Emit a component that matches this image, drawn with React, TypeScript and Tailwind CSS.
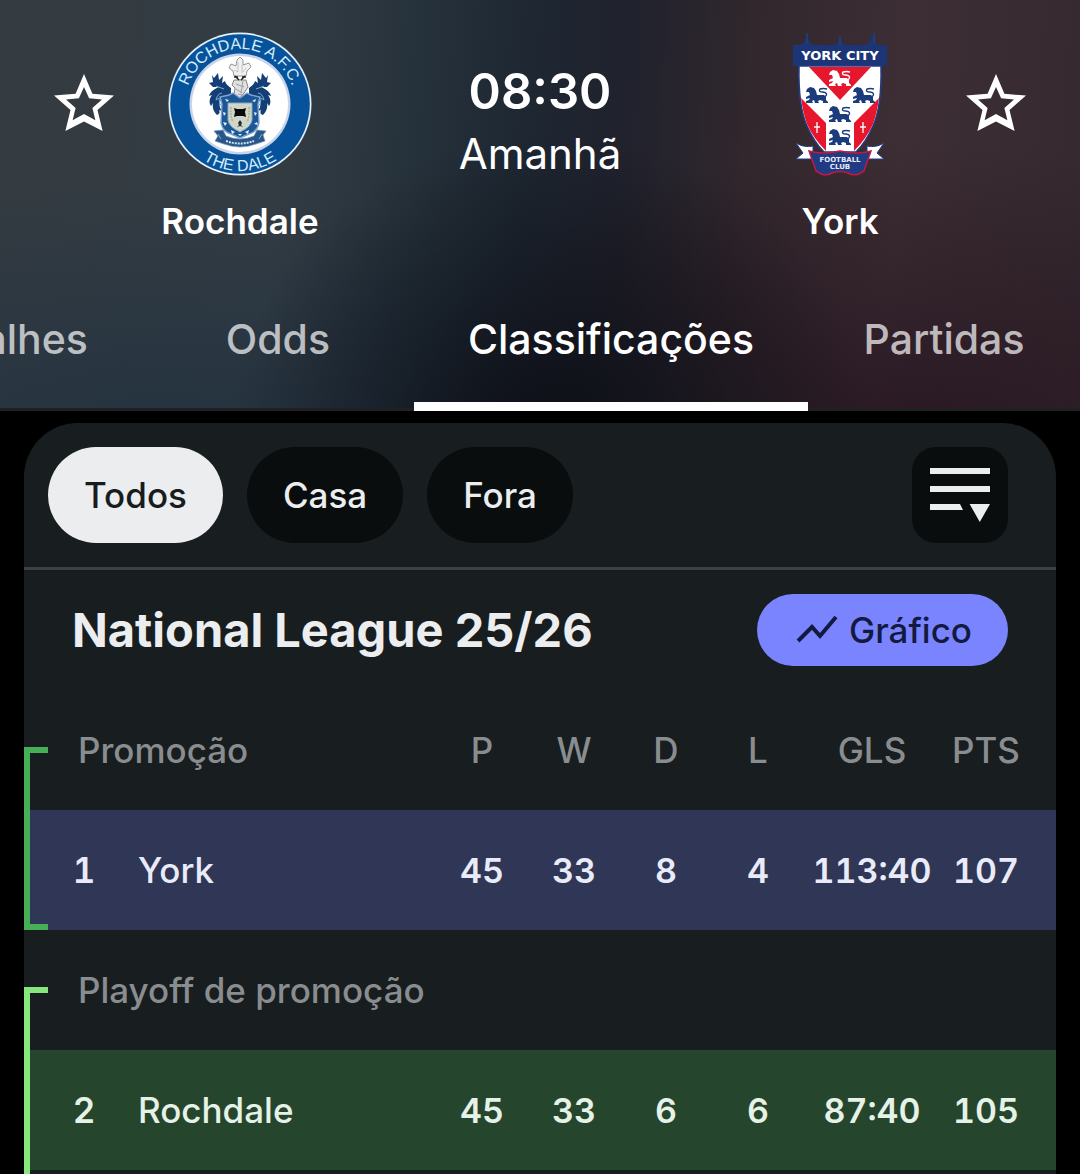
import { useState } from "react";
import { clsx } from "clsx";

interface Standing {
  rank: number;
  team: string;
  stats: string[];
  rowClass: string;
}

interface StandingGroup {
  label: string;
  bracketClass: string;
  rows: Standing[];
}

const tabs = ["Detalhes", "Odds", "Classificações", "Partidas"];
const filters = ["Todos", "Casa", "Fora"];
const columns = ["P", "W", "D", "L", "GLS", "PTS"];

const groups: StandingGroup[] = [
  {
    label: "Promoção",
    bracketClass: "bottom-0 border-y-6 border-[#46af58]",
    rows: [
      {
        rank: 1,
        team: "York",
        stats: ["45", "33", "8", "4", "113:40", "107"],
        rowClass: "bg-[#303656] text-[#e9ebf8]",
      },
    ],
  },
  {
    label: "Playoff de promoção",
    bracketClass: "-bottom-1 border-t-6 border-[#87e67c]",
    rows: [
      {
        rank: 2,
        team: "Rochdale",
        stats: ["45", "33", "6", "6", "87:40", "105"],
        rowClass: "bg-[#25452d] text-[#e6f2e7]",
      },
    ],
  },
];

function RochdaleCrest() {
  return (
    <svg viewBox="0 0 144 144" className="size-36" role="img" aria-label="Rochdale A.F.C.">
      <defs>
        <path id="roch-top" d="M17 72a55 55 0 0 1 110 0" />
        <path id="roch-bottom" d="M5 72a67 67 0 0 0 134 0" />
      </defs>
      <circle cx="72" cy="72" r="71.5" fill="#e4f1fa" />
      <circle cx="72" cy="72" r="69.8" fill="#06539c" />
      <circle cx="72" cy="72" r="50.5" fill="#c9d4ea" />
      <circle cx="72" cy="72" r="48" fill="#fff" />
      <g fill="#d3ecfb" fontFamily="Liberation Sans, sans-serif" fontSize="16" textAnchor="middle">
        <text>
          <textPath href="#roch-top" startOffset="50%">ROCHDALE A.F.C.</textPath>
        </text>
        <text>
          <textPath href="#roch-bottom" startOffset="50%">THE DALE</textPath>
        </text>
      </g>
      {/* mantling */}
      <g fill="#123f75">
        <path id="roch-mantle" d="M63 56c-4-3-5-4-6-7l-3 2 1-7-4 4-1-7-4 5-2-3 1 7-4 1 4 4 6 0c-5 2-9 5-10 9l3-1c-3 4-3 8-1 11l2-3c-1 5 1 9 4 12 3-1 3-3 2-5l3 1c-3-4-3-8-1-11l2 2c0-5 4-7 8-6z" />
        <use href="#roch-mantle" transform="matrix(-1 0 0 1 144 0)" />
      </g>
      <path d="M54 61q-5 1-6 7l3-2q0 6 3 9M90 61q5 1 6 7l-3-2q0 6-3 9M48 54l8 3M96 54l-8 3" fill="none" stroke="#7fa9d4" strokeWidth="1" />
      {/* helmet and wool sack */}
      <path d="M69 28l3-3 3 3v5l6-2 2 4-4 4-1 5H66l-1-5-4-3 2-4 5 2z" fill="#f1f1f1" stroke="#8d8d8d" strokeWidth=".9" />
      <path d="M70 30v10M74 33v8M66 38l4 2M78 36l-3 4" stroke="#b9b9b9" strokeWidth=".8" />
      <path d="M66 48h12l2 7-4 6-5 6-5-4 1-7-3-3z" fill="#e0e0e2" stroke="#77777c" strokeWidth=".9" />
      <path d="M68 52l8 3M68 57l6 4M75 49l-2 12M70 62l4 1" stroke="#96969b" strokeWidth=".9" />
      <path d="M67 44l4 4M77 44l-4 4M66 45h4M74 45h4" stroke="#16202c" strokeWidth="1.4" />
      {/* shield */}
      <path d="M52 65l9-2 4-2 7 5 7-5 4 2 9 2-2 7 1 19q-2 9-10 11l-9 4-9-4q-8-2-10-11l1-19z" fill="#1b5796" stroke="#7ea3cb" strokeWidth="1.4" />
      <path d="M60 71h24v17q-1 7-12 12-11-5-12-12z" fill="#cfd7cb" stroke="#89a6c5" strokeWidth="1" />
      <path d="M63 75q-1 9 2 15M81 75q1 9-2 15" fill="none" stroke="#a9b57a" strokeWidth="1.5" strokeDasharray="2 1" />
      <path d="M66 76l3 1h6l3-1-1 4 1 5-3-1h-6l-3 1 1-5z" fill="#0b0b0b" />
      <path d="M70 91l2-3 2 3-1 2 2 2-3-1-3 1 2-2z" fill="#2a2b28" />
      <g fill="#e6f2fa">
        <path d="M57 67l4 1-2 2zM84 69l4-2-1 3zM55 80l3 1-2 3zM86 80l3 1-2 3zM55 90l4 1-2 3zM86 92l3-2 1 3zM63 98l4 2-3 2zM77 100l4-2-1 4zM70 102h4l-2 2z" />
      </g>
      {/* motto ribbon */}
      <path d="M46 99l9-1 3 6q14 6 28 0l3-6 9 1-3 4 2 6-9 3q-16 6-32 0l-9-3 3-5z" fill="#275789" stroke="#7494b6" strokeWidth=".7" />
      <path d="M58 109q14 5 28 0" fill="none" stroke="#d4e2ef" strokeWidth="2" strokeDasharray="2 1" />
      <path d="M50 102l3 5M94 102l-3 5" stroke="#86a7cb" />
    </svg>
  );
}

function YorkCrest() {
  return (
    <svg viewBox="0 0 96 144" className="h-36 w-24" role="img" aria-label="York City Football Club">
      <defs>
        <g id="york-lion">
          <path
            d="M1 2l3-2 4 1 2 3 1 4h7l2 2v3l2 2v1h-5v-2l-3-1-2 1 1 2H9l-1-3-2 1 1 2H0v-2l3-1 1-2-4 1v-2l4-2-1-3-3 0z"
            fill="currentColor"
          />
          <path d="M19 10q4-4-2-5-5 0-3-3 3-1 7 0" fill="none" stroke="currentColor" strokeWidth="1.4" />
        </g>
      </defs>
      <path d="M1 13h8l4-4 2-8 2 8 3 4h22l4-2 2-8 2 8 4 2h20l4-4 2-8 2 8 4 4h9v21H1z" fill="#1b3576" />
      <path d="M15 1v10M48 4v9M82 1v10" stroke="#253f83" strokeWidth="1.5" />
      <path d="M7 34h82q1 40-8 60-7 16-17 26H32Q22 110 15 94 6 74 7 34z" fill="#fff" stroke="#223d86" strokeWidth="1.6" />
      <path d="M17 35h62L48 68z" fill="#e6172d" />
      <path d="M9 66l25 25v28Q21 106 15 92 11 81 9 66zM87 66L62 91v28q13-13 19-27 4-11 6-26z" fill="#e6172d" />
      <text x="48" y="28" fill="#fff" fontFamily="DejaVu Sans, sans-serif" fontSize="13" fontWeight="700" textAnchor="middle">
        YORK CITY
      </text>
      <use href="#york-lion" x="37" y="38" color="#fff" />
      <g color="#1c3b7c">
        <use href="#york-lion" x="14" y="55" />
        <use href="#york-lion" x="61" y="55" />
        <use href="#york-lion" x="37" y="74" />
        <use href="#york-lion" x="37" y="97" />
      </g>
      <path d="M25 90v11M22 95h6M71 90v11M68 95h6" stroke="#fff" strokeWidth="1.3" />
      <path d="M4 111q8 5 17 3v13H4l7-6zM92 111q-8 5-17 3v13h17l-7-6z" fill="#fff" stroke="#223d86" strokeWidth="1" />
      <path d="M17 119q13 4 31 0 18 4 31 0l-7 20-5 3q-6 2-11-1-8-3-16 0-5 3-11 1l-5-3z" fill="#203b83" stroke="#c4193e" strokeWidth="1.5" />
      <g fill="#e8ecf7" fontFamily="DejaVu Sans, sans-serif" fontSize="7" fontWeight="700" textAnchor="middle">
        <text x="48" y="130">FOOTBALL</text>
        <text x="48" y="137">CLUB</text>
      </g>
    </svg>
  );
}

function FavoriteButton({ team }: { team: string }) {
  return (
    <button type="button" aria-label={`Favoritar ${team}`} className="mt-9 shrink-0 self-start">
      <svg viewBox="0 0 24 24" className="size-[72px]" fill="currentColor" fillRule="evenodd" aria-hidden="true">
        <path d="M22 9.2l-7.2-.6L12 2 9.200 8.600 2 9.2l5.500 4.800L5.800 21l6.200-3.200 6.200 3.200L16.500 14zM12 15.300l-3.800 2.100 1-4.100-3.200-2.800 4.300-.4L12 6.300l1.700 3.800 4.300.4-3.200 2.800 1 4.100z" />
      </svg>
    </button>
  );
}

function MatchHeader() {
  return (
    <div className="flex px-12 pt-8">
      <FavoriteButton team="Rochdale" />
      <div className="flex w-60 flex-col items-center gap-5">
        <RochdaleCrest />
        <p className="text-[35px] leading-[50px] font-semibold">Rochdale</p>
      </div>
      <div className="flex flex-1 flex-col items-center pt-7">
        <p className="text-[49px] leading-[64px] font-semibold">08:30</p>
        <p className="text-[42px] leading-[60px]">Amanhã</p>
      </div>
      <div className="flex w-60 flex-col items-center gap-5">
        <YorkCrest />
        <p className="text-[35px] leading-[50px] font-semibold">York</p>
      </div>
      <FavoriteButton team="York" />
    </div>
  );
}

function Tabs() {
  const [active, setActive] = useState("Classificações");

  return (
    <nav className="mt-[22px] flex h-[143px] justify-end overflow-hidden">
      {tabs.map((tab) => (
        <button
          key={tab}
          type="button"
          onClick={() => setActive(tab)}
          className={clsx(
            "min-w-[272px] shrink-0 px-[54px] text-[41px] font-medium",
            active === tab
              ? "border-b-9 border-white pt-[10px] text-white"
              : "border-b-3 border-[#202123] pt-1 text-white/70"
          )}
        >
          {tab}
        </button>
      ))}
    </nav>
  );
}

function FilterBar() {
  const [active, setActive] = useState("Todos");

  return (
    <div className="flex items-center gap-6 border-b-3 border-[#3d4143] py-6 pr-12 pl-6">
      {filters.map((filter) => (
        <button
          key={filter}
          type="button"
          onClick={() => setActive(filter)}
          className={clsx(
            "h-24 rounded-full px-9 text-[35px] font-medium",
            active === filter ? "bg-[#ebedef] text-[#171c1e]" : "bg-[#090d0e] text-[#ebedef]"
          )}
        >
          {filter}
        </button>
      ))}
      <button
        type="button"
        aria-label="Ordenar"
        className="ml-auto flex size-24 items-center justify-center rounded-3xl bg-[#090d0e] text-[#ebedef]"
      >
        <svg viewBox="0 0 24 24" className="size-[72px]" fill="currentColor" aria-hidden="true">
          <path d="M2 3h20v2H2zM2 9h20v2H2zM2 15h10l1 2H2zM15.2 15H22l-3.4 6z" />
        </svg>
      </button>
    </div>
  );
}

function StandingsTable() {
  return (
    <table className="w-full table-fixed border-collapse text-center text-[35px] font-medium">
      <colgroup>
        <col className="w-[114px]" />
        <col />
        <col className="w-[92px]" />
        <col className="w-[92px]" />
        <col className="w-[92px]" />
        <col className="w-[92px]" />
        <col className="w-[136px]" />
        <col className="w-[116px]" />
      </colgroup>
      {groups.map((group, index) => (
        <tbody key={group.label} className="relative">
          <tr className="h-[120px] text-[#8a8d8f]">
            <th colSpan={2} scope="rowgroup" className="pl-[54px] text-left font-medium whitespace-nowrap">
              {group.label}
              <span
                aria-hidden="true"
                className={clsx("absolute top-[57px] left-0 w-6 border-l-6", group.bracketClass)}
              />
            </th>
            {index === 0 ? (
              columns.map((column) => (
                <th key={column} scope="col" className="font-medium last:pr-6">
                  {column}
                </th>
              ))
            ) : (
              <td colSpan={6} />
            )}
          </tr>
          {group.rows.map((row) => (
            <tr key={row.team} className={clsx("h-[120px]", row.rowClass)}>
              <td className="pl-[6px] font-semibold tabular-nums">{row.rank}</td>
              <td className="text-left">{row.team}</td>
              {row.stats.map((stat, i) => (
                <td key={columns[i]} className="text-[34px] font-semibold tabular-nums last:pr-6">
                  {stat}
                </td>
              ))}
            </tr>
          ))}
        </tbody>
      ))}
    </table>
  );
}

export default function App() {
  return (
    <div className="flex min-h-screen flex-col bg-black font-['Inter','Liberation_Sans',sans-serif] text-white">
      <header className="bg-[radial-gradient(ellipse_30%_75%_at_51%_108%,#0c0e15_0%,transparent_100%),radial-gradient(ellipse_60%_65%_at_15%_110%,#1f3040cc_0%,transparent_100%),radial-gradient(ellipse_50%_75%_at_85%_110%,#281721_0%,transparent_100%),linear-gradient(94deg,#343b41_0%,#333c43_26%,#26323b_38%,#1e2732_48%,#20222d_57%,#31272d_68%,#3d2e35_82%,#35292f_100%)]">
        <MatchHeader />
        <Tabs />
      </header>
      <main className="mx-6 mt-3 flex-1 overflow-hidden rounded-t-[54px] bg-[#181d1f] pb-1">
        <FilterBar />
        <div className="flex h-[120px] items-center justify-between px-12 text-[#ebedef]">
          <h1 className="text-[47px] font-bold">National League 25/26</h1>
          <button
            type="button"
            className="flex h-[72px] items-center gap-2 rounded-full bg-[#7a84ff] px-9 text-[35px] font-medium text-[#121a3f]"
          >
            <svg viewBox="0 0 48 48" className="size-12" fill="none" stroke="currentColor" strokeWidth="4" aria-hidden="true">
              <path d="M5 35l14-14 8 9L43 11" />
            </svg>
            Gráfico
          </button>
        </div>
        <StandingsTable />
      </main>
    </div>
  );
}
